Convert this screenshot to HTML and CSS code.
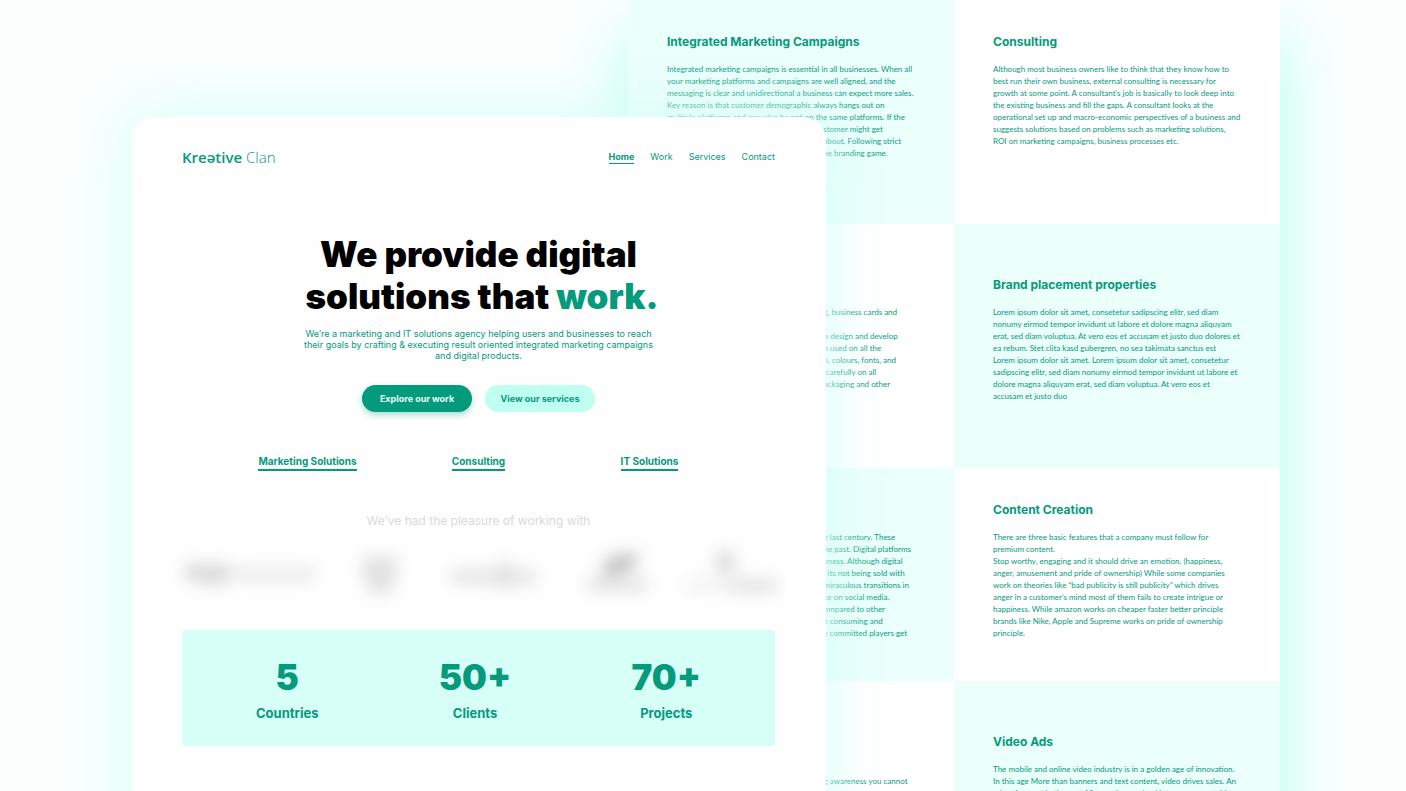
FILE: index.html
```html
<!DOCTYPE html>
<html lang="en">
<head>
<meta charset="utf-8">
<meta name="viewport" content="width=device-width, initial-scale=1">
<title>Kreative Clan</title>
<link rel="stylesheet" href="styles.css">
</head>
<body>
<main class="stage">
  <section class="services" aria-label="Services">
    <article class="cell cell-tint">
      <h2>Integrated Marketing Campaigns</h2>
      <p>Integrated marketing campaigns is essential in all businesses. When all<br>your marketing platforms and campaigns are well aligned, and the<br>messaging is clear and unidirectional a business can expect more sales.<br>Key reason is that customer demographic always hangs out on<br>multiple platforms and may also be not on the same platforms. If the</p>
      <p class="tail">stomer might get<br>about. Following strict<br>ne branding game.</p>
    </article>
    <article class="cell">
      <h2>Consulting</h2>
      <p>Although most business owners like to think that they know how to<br>best run their own business, external consulting is necessary for<br>growth at some point. A consultant’s job is basically to look deep into<br>the existing business and fill the gaps. A consultant looks at the<br>operational set up and macro-economic perspectives of a business and<br>suggests solutions based on problems such as marketing solutions,<br>ROI on marketing campaigns, business processes etc.</p>
    </article>
    <article class="cell cell-low cell-behind">
      <p>g, business cards and<br><br>o design and develop<br>n used on all the<br>n, colours, fonts, and<br>&nbsp;carefully on all<br>ackaging and other</p>
    </article>
    <article class="cell cell-tint cell-low">
      <h2>Brand placement properties</h2>
      <p>Lorem ipsum dolor sit amet, consetetur sadipscing elitr, sed diam<br>nonumy eirmod tempor invidunt ut labore et dolore magna aliquyam<br>erat, sed diam voluptua. At vero eos et accusam et justo duo dolores et<br>ea rebum. Stet clita kasd gubergren, no sea takimata sanctus est<br>Lorem ipsum dolor sit amet. Lorem ipsum dolor sit amet, consetetur<br>sadipscing elitr, sed diam nonumy eirmod tempor invidunt ut labore et<br>dolore magna aliquyam erat, sed diam voluptua. At vero eos et<br>accusam et justo duo</p>
    </article>
    <article class="cell cell-tint cell-short cell-behind">
      <p>e last century. These<br>he past. Digital platforms<br>eness. Although digital<br>, its not being sold with<br>miraculous transitions in<br>ce on social media.<br>ompared to other<br>e consuming and<br>y committed players get</p>
    </article>
    <article class="cell cell-short">
      <h2>Content Creation</h2>
      <p>There are three basic features that a company must follow for<br>premium content.<br>Stop worthy, engaging and it should drive an emotion. (happiness,<br>anger, amusement and pride of ownership) While some companies<br>work on theories like “bad publicity is still publicity” which drives<br>anger in a customer’s mind most of them fails to create intrigue or<br>happiness. While amazon works on cheaper faster better principle<br>brands like Nike, Apple and Supreme works on pride of ownership<br>principle.</p>
    </article>
    <article class="cell cell-low cell-behind">
      <p><br>g awareness you cannot</p>
    </article>
    <article class="cell cell-tint cell-low">
      <h2>Video Ads</h2>
      <p>The mobile and online video industry is in a golden age of innovation.<br>In this age More than banners and text content, video drives sales. An<br>advertisement in the past 10 years has evolved into a more portable</p>
    </article>
  </section>

  <section class="home" aria-label="Home page">
    <header class="topbar">
      <a class="logo" href="#"><strong>Kreətive</strong> Clan</a>
      <nav class="nav">
        <a class="active" href="#">Home</a>
        <a href="#">Work</a>
        <a href="#">Services</a>
        <a href="#">Contact</a>
      </nav>
    </header>
    <div class="hero">
      <h1>We provide digital<br>&nbsp;solutions that <em>work.</em></h1>
      <p>We’re a marketing and IT solutions agency helping users and businesses to reach<br>their goals by crafting &amp; executing result oriented integrated marketing campaigns<br>and digital products.</p>
      <div class="actions">
        <button class="btn btn-primary" type="button">Explore our work</button>
        <button class="btn btn-soft" type="button">View our services</button>
      </div>
    </div>
    <nav class="offers">
      <a href="#">Marketing Solutions</a>
      <a href="#">Consulting</a>
      <a href="#">IT Solutions</a>
    </nav>
    <p class="clients-title">We’ve had the pleasure of working with</p>
    <svg class="clients" viewBox="0 0 614 72" aria-hidden="true">
      <defs><filter id="soft" x="-20%" y="-60%" width="140%" height="220%"><feGaussianBlur stdDeviation="8"/></filter></defs>
      <g filter="url(#soft)">
        <path fill="#d0d0d0" d="M13 27h40l8 6-10 16-38-6z"/>
        <path fill="#e6e6e6" d="M61 30h82v14H61z"/>
        <path fill="#dadada" d="M191 20h34v16l-6 20h-20l-8-20z"/>
        <path fill="#dadada" d="M280 33h34v13h-34zM314 34h50v13h-50zM326 24h14v26h-14z"/>
        <path fill="#b4b4b4" d="M430 38c0-18 16-24 38-20-4 16-16 24-38 20z"/>
        <path fill="#dadada" d="M416 42h60v12h-60z"/>
        <path fill="#cecece" d="M546 15h16v21h-16z"/>
        <path fill="#dadada" d="M558 42h48v13h-48z"/>
        <path fill="#ececec" d="M514 43h44v10h-44z"/>
      </g>
    </svg>
    <dl class="stats">
      <div><dd>5</dd><dt>Countries</dt></div>
      <div><dd>50+</dd><dt>Clients</dt></div>
      <div><dd>70+</dd><dt>Projects</dt></div>
    </dl>
  </section>
</main>
</body>
</html>
```
FILE: styles.css
```css
* { box-sizing: border-box; margin: 0; }

:root {
  --green: #049a7c;
  --tint: #ebfffb;
}

body {
  background: #fafffe;
  color: var(--green);
  font-family: Inter, "Liberation Sans", sans-serif;
}

a { color: inherit; text-decoration: none; }

/* The two pages share the third column, where the home page lies on top. */
.stage {
  display: grid;
  grid-template-columns: 132fr 496fr 198fr 454fr 126fr;
  height: 100vh;
  overflow: hidden;
}

.services {
  grid-area: 1 / 3 / 2 / 5;
  display: grid;
  grid-template-columns: 1fr 1fr;
  align-content: start;
  background: #fff;
  box-shadow: 0 40px 60px #b0fff0;
}

.cell { padding: 34px 39px 65px; background: #fff; }
.cell-tint { background: var(--tint); }
.cell-low { padding-top: 53px; padding-bottom: 66px; }
.cell-short { padding-bottom: 42px; }

/* Cells whose left part lies under the home page. */
.cell-behind { padding-left: 60%; padding-right: 0; padding-top: 63px; }
.cell-behind.cell-low { padding-top: 82px; }

.cell h2 {
  font-size: 12px;
  line-height: 16px;
  font-weight: 700;
  margin-bottom: 13px;
}

.cell p {
  font: 8px/12px Lato, sans-serif;
  white-space: nowrap;
}
.cell .tail { margin-left: 63%; }

.home {
  grid-area: 1 / 2 / 2 / 4;
  margin-top: 117px;
  padding: 32px 51px 45px 50px;
  border-radius: 24px 24px 0 0;
  background: linear-gradient(#fefefe 90%, #fafffd);
  box-shadow: 0 0 60px 4px #d8fff7;
}

.topbar {
  display: flex;
  justify-content: space-between;
  align-items: center;
}

.logo {
  font: 300 15px/16px "Open Sans", sans-serif;
}
.logo strong { font-weight: 600; }

.nav {
  display: flex;
  gap: 16px;
  font-size: 9px;
  line-height: 13px;
}
.nav a { border-bottom: 1px solid transparent; }
.nav .active { font-weight: 700; border-color: var(--green); }

.hero { margin-top: 68px; text-align: center; }

.hero h1 {
  color: #000;
  font-size: 35px;
  line-height: 42px;
  font-weight: 900;
}
.hero em { color: var(--green); font-style: normal; }

.hero p {
  margin-top: 11px;
  font-size: 9px;
  line-height: 11px;
}

.actions {
  display: flex;
  justify-content: center;
  gap: 13px;
  margin-top: 24px;
}

.btn {
  width: 110px;
  height: 27px;
  padding: 0;
  border: 0;
  border-radius: 14px;
  font: 700 9px/12px Inter, sans-serif;
}
.btn-primary {
  background: var(--green);
  color: #e6fffa;
  box-shadow: 0 3px 6px #049a7c55;
}
.btn-soft { background: #bffff2; color: var(--green); }

.offers {
  display: grid;
  grid-template-columns: repeat(3, 171px);
  justify-content: center;
  justify-items: center;
  margin-top: 42px;
  font-size: 10px;
  line-height: 14px;
  font-weight: 700;
}
.offers a { padding-bottom: 1px; border-bottom: 2px solid var(--green); }

.clients-title {
  margin-top: 42px;
  text-align: center;
  font-size: 12px;
  line-height: 16px;
  color: #dadada;
}

.clients {
  display: block;
  width: calc(100% + 20px);
  margin: 8px -10px 0;
  opacity: 0.8;
}

.stats {
  display: flex;
  justify-content: space-between;
  margin-top: 21px;
  padding: 25px 74px 24px;
  border-radius: 4px;
  background: #d6fff7;
  text-align: center;
}
.stats div { display: flex; flex-direction: column; gap: 5px; }
.stats dd { margin: 0; font-size: 35px; line-height: 44px; font-weight: 900; }
.stats dt { font-size: 13px; line-height: 18px; font-weight: 700; }
```
